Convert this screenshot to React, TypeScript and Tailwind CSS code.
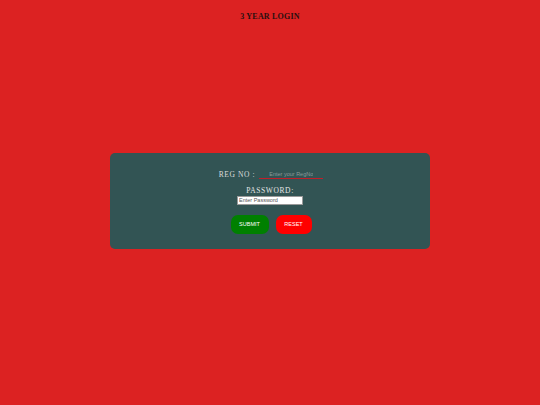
import React from 'react';

const App: React.FC = () => {
  return (
    <div className="w-[540px] h-[405px] bg-[#dc2222] flex flex-col items-center" style={{ fontFamily: '"Liberation Serif", serif' }}>
      <h1 className="mt-[11px] text-[8px] font-bold text-[#2a1010] tracking-[0.2px]">3 YEAR LOGIN</h1>

      {/* login card */}
      <div className="mt-[130px] w-[320px] h-[96px] bg-[#325454] rounded-[5px] flex flex-col items-center pt-[16px]">
        <div className="flex items-end gap-[4px] ml-[2px]">
          <label className="text-[7.5px] font-normal text-[#dcdcdc] tracking-[0.6px] leading-none mb-[1px]">REG NO :</label>
          <input
            placeholder="Enter your RegNo"
            className="w-[64px] h-[10px] bg-transparent border-0 border-b border-[#c01f2a] px-[10px] text-[5.5px] text-[#ccc] placeholder:text-[#8a9a9a] outline-none"
            style={{ fontFamily: '"Liberation Sans", sans-serif' }}
          />
        </div>
        <label className="mt-[8px] text-[7.5px] font-normal text-[#e4e4e4] tracking-[0.6px] leading-none">PASSWORD:</label>
        <input
          type="password"
          placeholder="Enter Password"
          className="mt-[1px] w-[66px] h-[9px] bg-white border border-[#999] px-[1px] text-[5.5px] placeholder:text-[#555] outline-none"
          style={{ fontFamily: '"Liberation Sans", sans-serif' }}
        />
        <div className="mt-[10px] ml-[2px] flex gap-[7px]">
          <button
            className="w-[38px] h-[19px] rounded-[7px] bg-[#008000] text-white text-[5.5px]"
            style={{ fontFamily: '"Liberation Sans", sans-serif' }}
          >
            SUBMIT
          </button>
          <button
            className="w-[36px] h-[19px] rounded-[7px] bg-[#ff0000] text-white text-[5.5px]"
            style={{ fontFamily: '"Liberation Sans", sans-serif' }}
          >
            RESET
          </button>
        </div>
      </div>
    </div>
  );
};

export default App;
